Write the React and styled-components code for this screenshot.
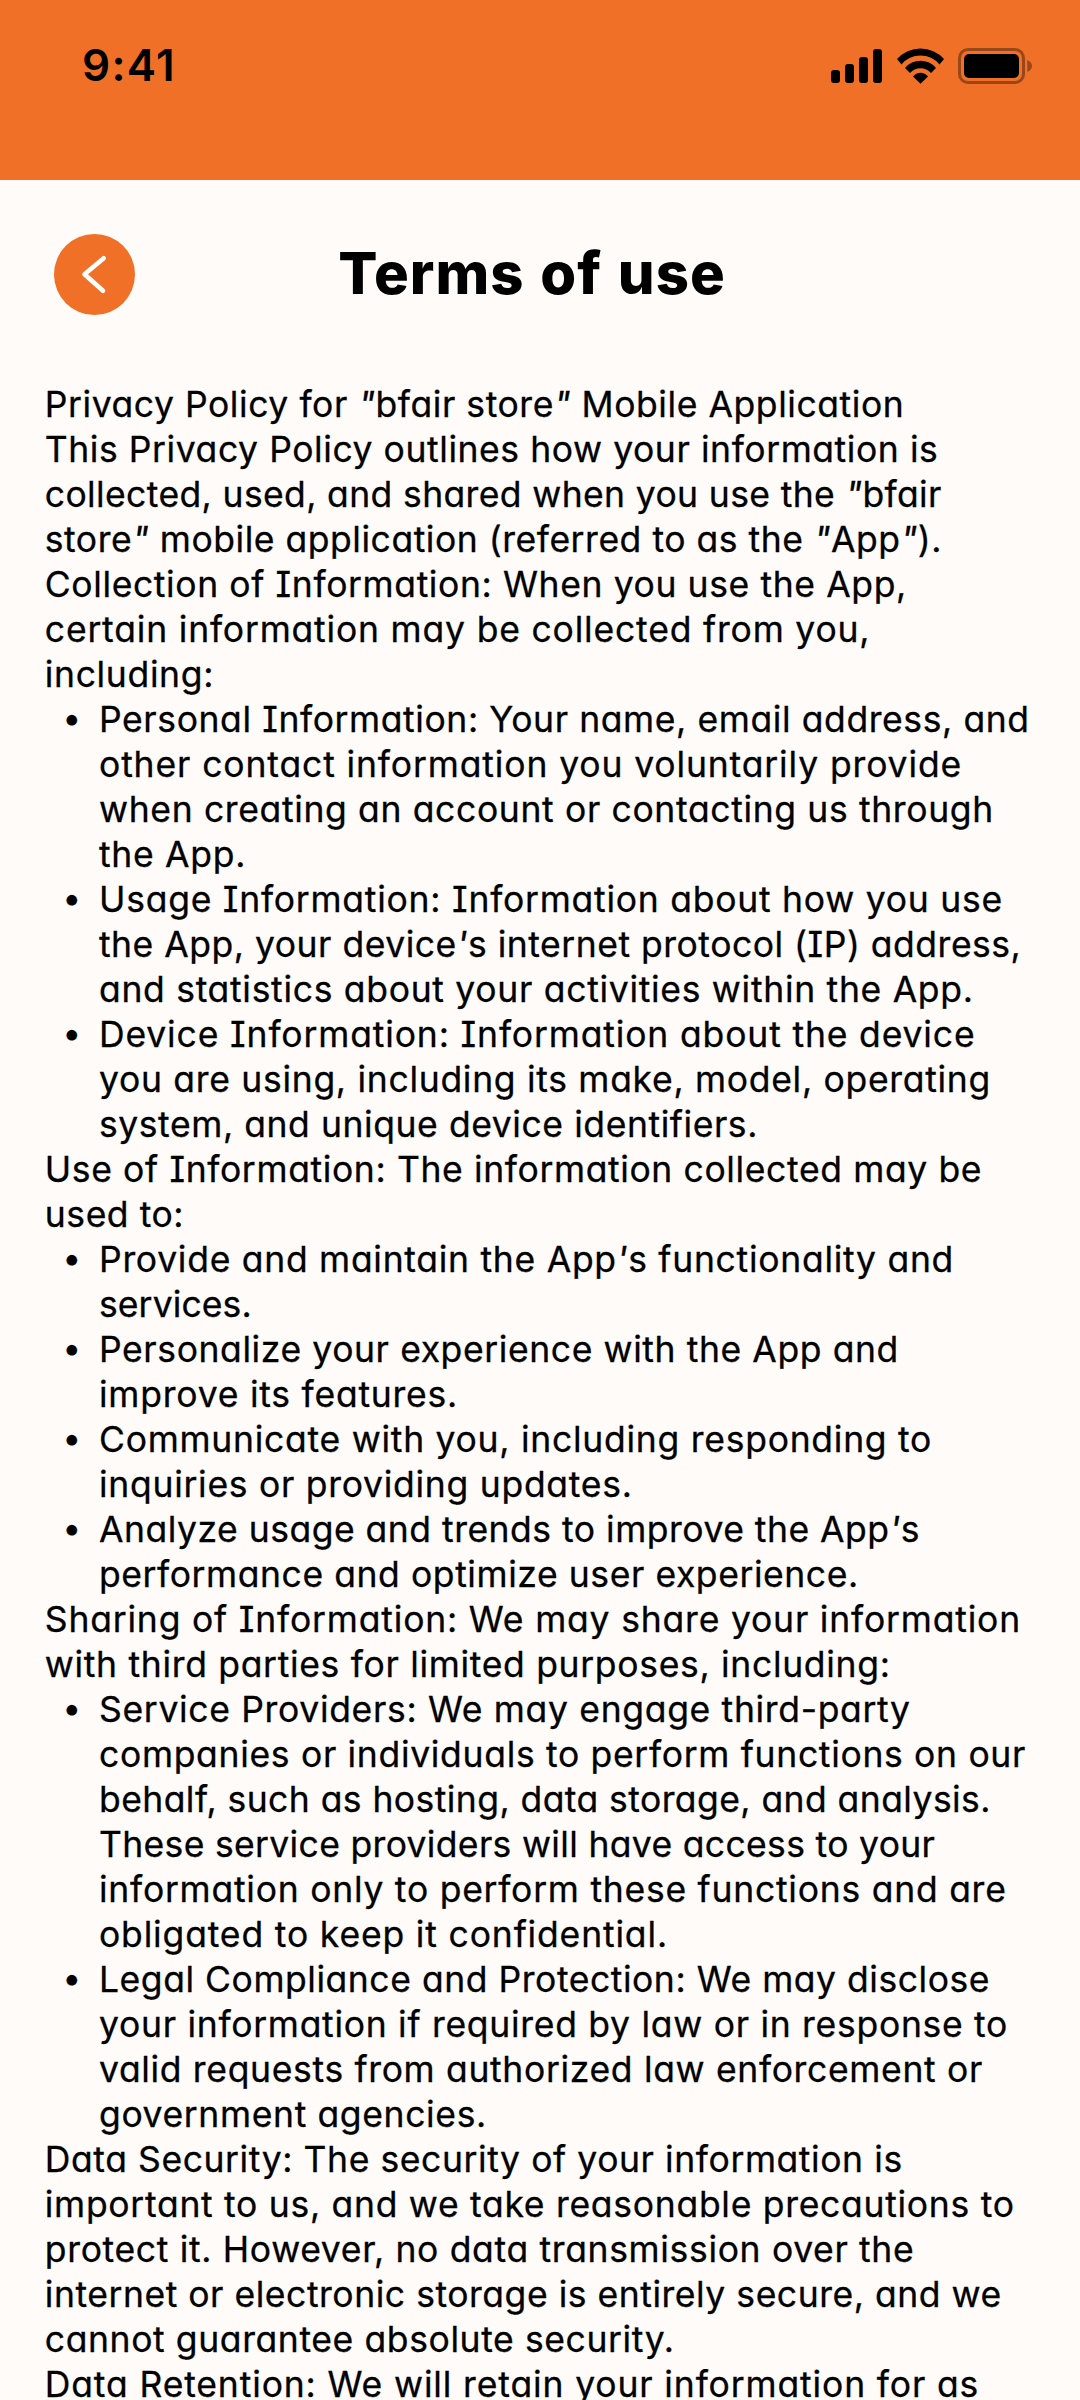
import React from "react";
import styled, { createGlobalStyle } from "styled-components";

const GlobalStyle = createGlobalStyle`
  * { box-sizing: border-box; }
  body { margin: 0; background: #fffbf8; }
`;

const Screen = styled.div`
  display: flex;
  flex-direction: column;
  width: 1080px;
  height: 2400px;
  overflow: hidden;
  background: #fffbf8;
  color: #000;
  font-family: Inter, "Liberation Sans", sans-serif;
`;

const StatusBar = styled.header`
  display: flex;
  align-items: flex-start;
  justify-content: space-between;
  flex: none;
  height: 180px;
  padding: 48px 48px 0 82px;
  background: #ef7026;
`;

const Time = styled.span`
  font-size: 44px;
  font-weight: 600;
  line-height: 34px;
  letter-spacing: 1.3px;
`;

const StatusIcons = styled.div`
  display: flex;
  align-items: flex-start;
  svg { display: block; }
  svg + svg { margin-left: 15px; }
  svg:last-child { margin-left: 14px; }
`;

const TitleBar = styled.div`
  display: grid;
  grid-template-columns: 81px 1fr 81px;
  align-items: center;
  flex: none;
  height: 202px;
  padding: 0 70px 13px 54px;
`;

const BackButton = styled.button`
  display: grid;
  place-items: center;
  width: 81px;
  height: 81px;
  padding: 0;
  border: 0;
  border-radius: 50%;
  background: #ef7026;
`;

const Title = styled.h1`
  margin: 0;
  padding-bottom: 3px;
  font-size: 58px;
  font-weight: 800;
  line-height: 72px;
  letter-spacing: 1.05px;
  word-spacing: 2px;
  text-align: center;
  white-space: nowrap;
`;

const Document = styled.main`
  padding-left: 44.8px;
  font-size: 35.5px;
  line-height: 45px;
  font-feature-settings: "cv11", "cv08";
  -webkit-text-stroke: 0.3px #000;
`;

const Paragraph = styled.p`
  margin: 0;
`;

const List = styled.ul`
  margin: 0;
  padding: 0;
  list-style: none;
`;

const Item = styled.li`
  display: grid;
  grid-template-columns: 54.2px 1fr;
`;

const Bullet = styled.span`
  font-size: 33px;
  line-height: 43px;
  text-align: center;
`;

const Line = styled.span`
  display: block;
  white-space: nowrap;
  letter-spacing: ${(p) => p.$track}px;
`;

const Quote = styled.span`
  font-style: italic;
`;

const sections = [
  { lines: [['Privacy Policy for "bfair store" Mobile Application', 0.56]] },
  {
    lines: [
      ["This Privacy Policy outlines how your information is", 0.57],
      ['collected, used, and shared when you use the "bfair', 0.37],
      ['store" mobile application (referred to as the "App").', 0.53],
    ],
  },
  {
    lines: [
      ["Collection of Information: When you use the App,", 0.61],
      ["certain information may be collected from you,", 0.81],
      ["including:", 0.65],
    ],
    items: [
      [
        ["Personal Information: Your name, email address, and", 0.59],
        ["other contact information you voluntarily provide", 0.87],
        ["when creating an account or contacting us through", 0.64],
        ["the App.", 0.7],
      ],
      [
        ["Usage Information: Information about how you use", 0.75],
        ["the App, your device's internet protocol (IP) address,", 0.51],
        ["and statistics about your activities within the App.", 0.7],
      ],
      [
        ["Device Information: Information about the device", 0.85],
        ["you are using, including its make, model, operating", 0.7],
        ["system, and unique device identifiers.", 0.57],
      ],
    ],
  },
  {
    lines: [
      ["Use of Information: The information collected may be", 0.62],
      ["used to:", 0.55],
    ],
    items: [
      [
        ["Provide and maintain the App's functionality and", 0.72],
        ["services.", 0.1],
      ],
      [
        ["Personalize your experience with the App and", 0.59],
        ["improve its features.", 0.77],
      ],
      [
        ["Communicate with you, including responding to", 0.73],
        ["inquiries or providing updates.", 0.72],
      ],
      [
        ["Analyze usage and trends to improve the App's", 0.5],
        ["performance and optimize user experience.", 0.57],
      ],
    ],
  },
  {
    lines: [
      ["Sharing of Information: We may share your information", 0.81],
      ["with third parties for limited purposes, including:", 0.68],
    ],
    items: [
      [
        ["Service Providers: We may engage third-party", 0.67],
        ["companies or individuals to perform functions on our", 0.68],
        ["behalf, such as hosting, data storage, and analysis.", 0.43],
        ["These service providers will have access to your", 0.33],
        ["information only to perform these functions and are", 0.75],
        ["obligated to keep it confidential.", 0.84],
      ],
      [
        ["Legal Compliance and Protection: We may disclose", 0.54],
        ["your information if required by law or in response to", 0.71],
        ["valid requests from authorized law enforcement or", 0.66],
        ["government agencies.", 0.63],
      ],
    ],
  },
  {
    lines: [
      ["Data Security: The security of your information is", 0.58],
      ["important to us, and we take reasonable precautions to", 0.71],
      ["protect it. However, no data transmission over the", 0.66],
      ["internet or electronic storage is entirely secure, and we", 0.53],
      ["cannot guarantee absolute security.", 0.6],
    ],
  },
  { lines: [["Data Retention: We will retain your information for as", 0.86]] },
];

const withQuotes = (text) =>
  text
    .split(/(["'])/)
    .map((part, i) => (i % 2 ? <Quote key={i}>{part}</Quote> : part));

const Lines = ({ lines }) =>
  lines.map(([text, track]) => (
    <Line key={text} $track={track}>
      {withQuotes(text)}
    </Line>
  ));

const SignalIcon = () => (
  <svg width="51" height="36" viewBox="0 0 51 36">
    <rect x="0" y="22" width="9" height="13" rx="3" />
    <rect x="14" y="16" width="9" height="19" rx="3" />
    <rect x="28" y="9" width="9" height="26" rx="3" />
    <rect x="42" y="1" width="9" height="34" rx="3" />
  </svg>
);

const WifiIcon = () => (
  <svg width="47" height="36" viewBox="0 0 47 36">
    <path d="M0 11A31.5 31.5 0 0 1 47 11L42.5 16.5A24.5 24.5 0 0 0 4.5 16.5Z" />
    <path d="M8 20A20 20 0 0 1 39 20L34 25A14 14 0 0 0 13 25Z" />
    <path d="M16 28.5A9.5 9.5 0 0 1 31 28.5L23.5 35.8Z" />
  </svg>
);

const BatteryIcon = () => (
  <svg width="74" height="36" viewBox="0 0 74 36">
    <rect x="1.5" y="1.5" width="64" height="33" rx="8.5" fill="none" stroke="#000" strokeWidth="3" opacity=".36" />
    <path d="M69.3 12C71.8 13 74 15.3 74 18C74 20.7 71.8 23 69.3 24Z" opacity=".36" />
    <rect x="6" y="6" width="55" height="24" rx="5" />
  </svg>
);

const ChevronIcon = () => (
  <svg width="81" height="81" viewBox="0 0 81 81" fill="none" stroke="#fff" strokeWidth="4.6" strokeLinecap="round" strokeLinejoin="round">
    <path d="M49.7 24.3L30.5 40.3L49 56.8" />
  </svg>
);

export default function App() {
  return (
    <Screen>
      <GlobalStyle />
      <StatusBar>
        <Time>9:41</Time>
        <StatusIcons>
          <SignalIcon />
          <WifiIcon />
          <BatteryIcon />
        </StatusIcons>
      </StatusBar>
      <TitleBar>
        <BackButton aria-label="Back">
          <ChevronIcon />
        </BackButton>
        <Title>Terms of use</Title>
      </TitleBar>
      <Document>
        {sections.map((section) => (
          <React.Fragment key={section.lines[0][0]}>
            <Paragraph>
              <Lines lines={section.lines} />
            </Paragraph>
            {section.items && (
              <List>
                {section.items.map((item) => (
                  <Item key={item[0][0]}>
                    <Bullet>•</Bullet>
                    <div>
                      <Lines lines={item} />
                    </div>
                  </Item>
                ))}
              </List>
            )}
          </React.Fragment>
        ))}
      </Document>
    </Screen>
  );
}
